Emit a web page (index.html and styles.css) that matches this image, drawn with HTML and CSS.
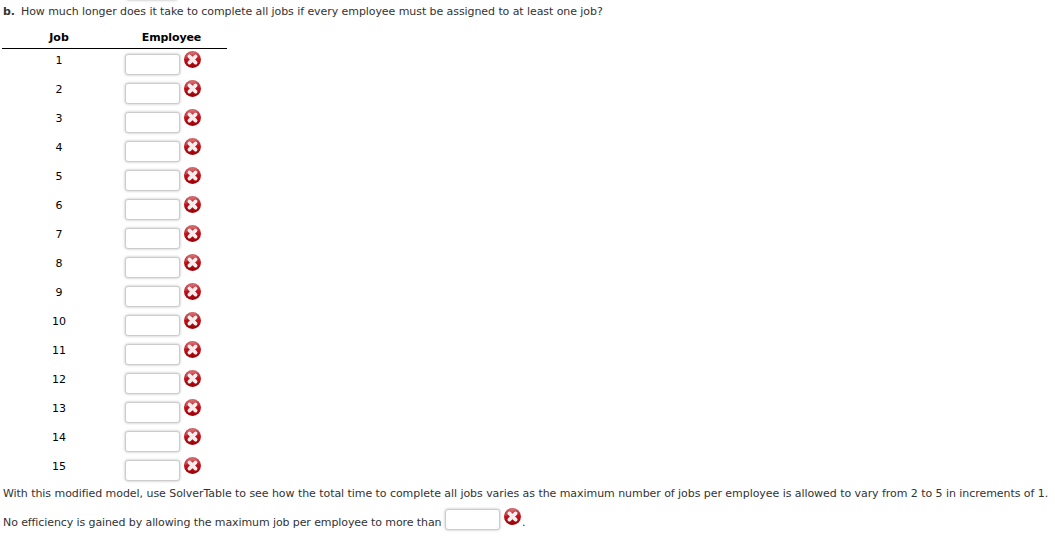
FILE: index.html
```html
<!DOCTYPE html>
<html lang="en">
<head>
<meta charset="utf-8">
<title>Job assignment</title>
<link rel="stylesheet" href="styles.css">
</head>
<body>
<svg class="defs" aria-hidden="true">
  <defs>
    <linearGradient id="red" x1="0" y1="0" x2="0" y2="1">
      <stop offset="0" stop-color="#cf6a6c"/>
      <stop offset=".25" stop-color="#c5333a"/>
      <stop offset=".5" stop-color="#c0101a"/>
      <stop offset="1" stop-color="#980004"/>
    </linearGradient>
    <symbol id="wrong" viewBox="0 0 17 17">
      <circle cx="8.5" cy="8.5" r="8.5" fill="url(#red)"/>
      <path d="M1 8.5A7.5 7.5 0 0 1 13 2.5Q7 4 1 8.5Z" fill="#fff" opacity=".14"/>
      <path d="M5.4 5.4L11.6 11.6M11.6 5.4L5.4 11.6" stroke="#f6eeee" stroke-width="3.7" stroke-linecap="round"/>
    </symbol>
  </defs>
</svg>
<div class="previous"></div>
<main class="page">
  <p class="question"><b class="part">b.</b><span class="question-text">How much longer does it take to complete all jobs if every employee must be assigned to at least one job?</span></p>
  <div class="table">
    <div class="row head"><span class="cell">Job</span><span class="cell employee">Employee</span></div>
    <div id="rows"></div>
  </div>
  <p class="line solver">With this modified model, use SolverTable to see how the total time to complete all jobs varies as the maximum number of jobs per employee is allowed to vary from 2 to 5 in increments of 1.</p>
  <div class="line answer"><span class="answer-text">No efficiency is gained by allowing the maximum job per employee to more than</span><input class="box" type="text" aria-label="Maximum jobs"><svg class="icon"><use href="#wrong"/></svg><span class="stop">.</span></div>
</main>
<script src="rows.js"></script>
</body>
</html>
```
FILE: rows.js
```js
const rows = document.getElementById('rows');
for (let job = 1; job <= 15; job++) {
  rows.insertAdjacentHTML('beforeend',
    `<div class="row"><span class="cell">${job}</span><span class="entry"><input class="box" type="text" aria-label="Employee for job ${job}"><svg class="icon"><use href="#wrong"/></svg></span></div>`);
}
```
FILE: styles.css
```css
* { box-sizing: border-box; }
body {
  margin: 0;
  height: 540px;
  overflow: hidden;
  background: #fff;
  color: #333;
  font: 11px/14px Verdana, "DejaVu Sans", sans-serif;
}
.defs { position: absolute; width: 0; height: 0; }
.previous {
  position: absolute;
  left: 127px;
  top: -10px;
  width: 50px;
  height: 10px;
  box-shadow: 0 0 3px #aaa;
}
.page { padding: 5px 0 0 2px; white-space: nowrap; }
p { margin: 0; }
.question { display: flex; height: 21px; padding-left: 1px; letter-spacing: -0.073px; }
.part { width: 18px; }
.table { width: 225px; color: #000; }
.row { display: grid; grid-template-columns: 113px 112px; height: 29px; }
.cell { text-align: center; padding: 5px 0 0 1px; }
.head { height: 23px; border-bottom: 1px solid #000; font-weight: bold; }
.employee { letter-spacing: -0.1px; }
.entry { display: flex; gap: 4px; padding: 2px 0 0 10px; }
.box {
  width: 55px;
  height: 21px;
  margin: 3px 0 0;
  padding: 0 4px;
  border: 1px solid #ccc;
  border-radius: 3px;
  background: #fff;
  box-shadow: 0 0 3px #bbb;
  font: inherit;
}
.icon { width: 17px; height: 17px; flex: none; }
.line { padding-left: 1px; }
.solver { padding-top: 3px; height: 22px; letter-spacing: -0.057px; }
.answer { display: flex; }
.answer-text, .stop { padding-top: 10px; }
.answer-text { width: 442px; letter-spacing: -0.1px; }
.answer .icon { margin: 2px 0 0 4px; }
.stop { padding-left: 1px; }
```
